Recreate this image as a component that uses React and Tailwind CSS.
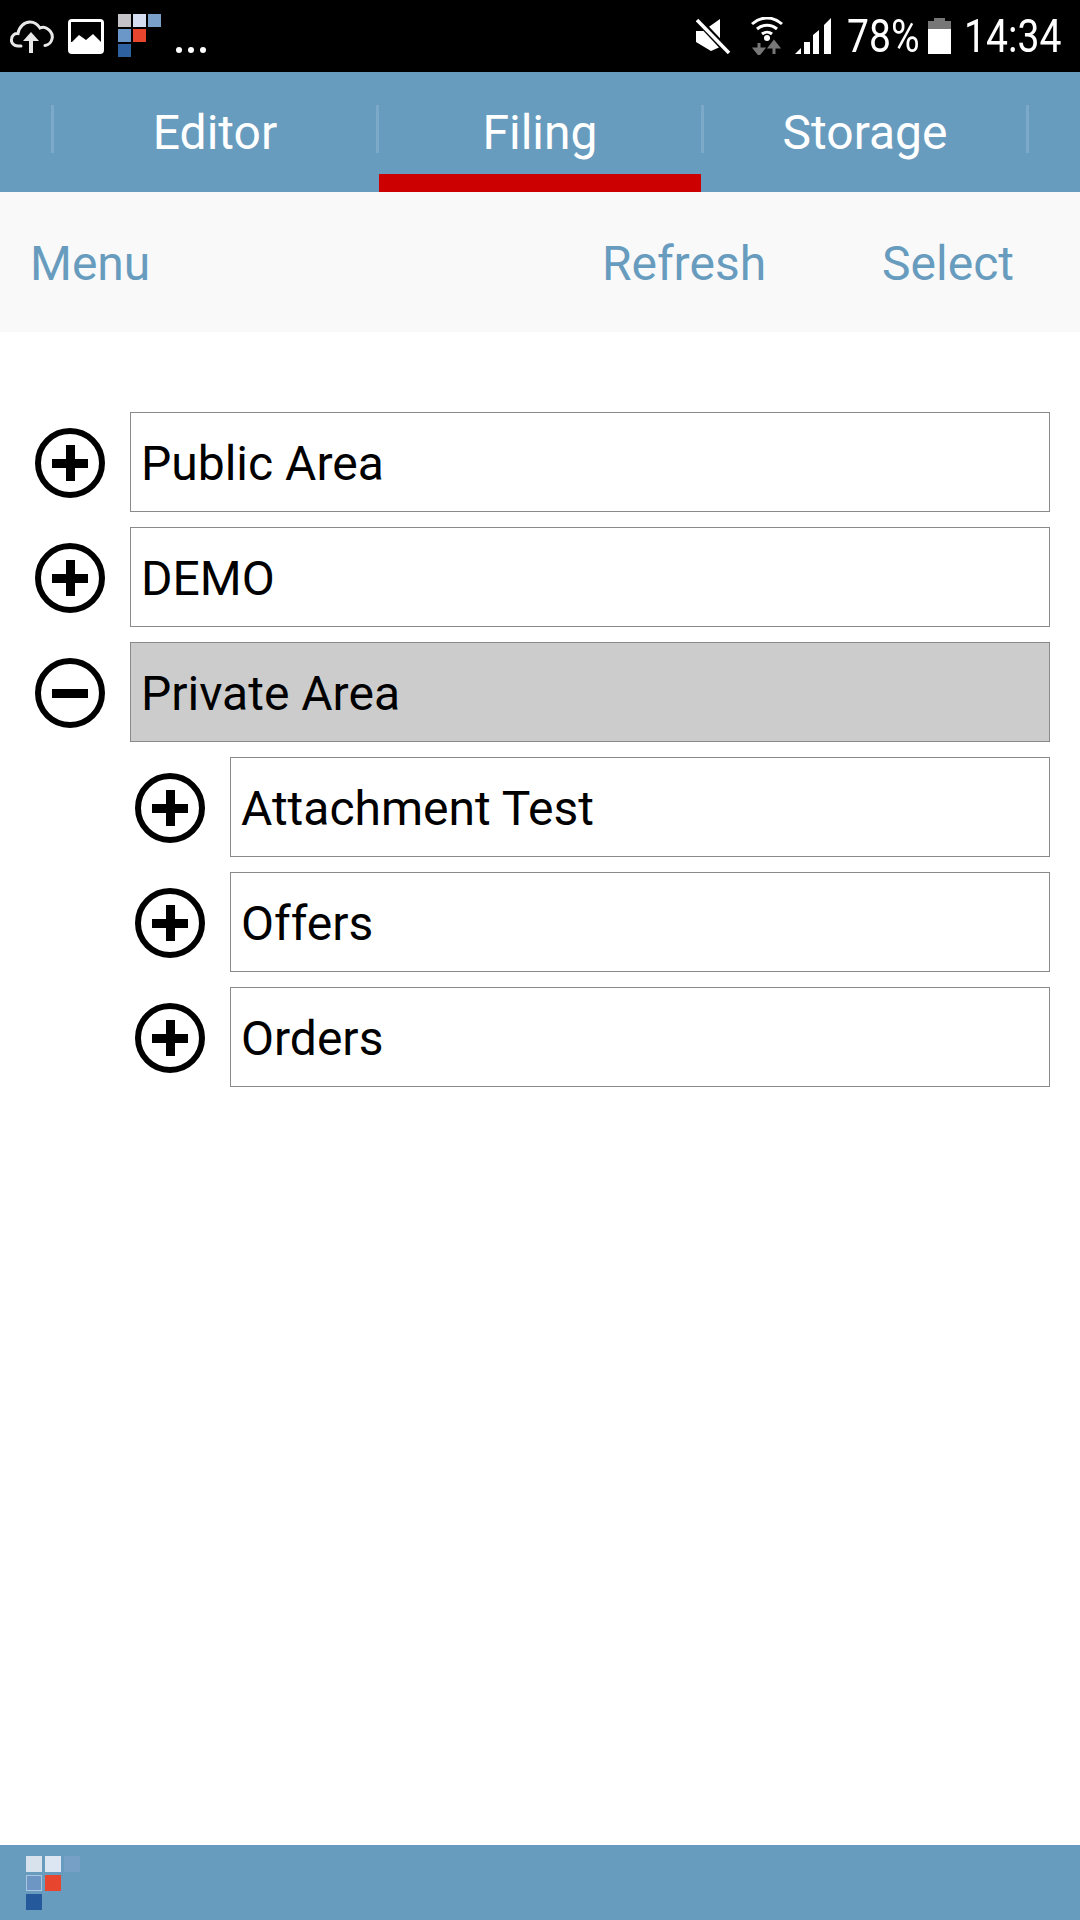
import React from 'react';

const StatusLogo = () => (
    <div className="grid grid-cols-[13px_13px_13px] grid-rows-[13px_13px_13px] gap-[2px] ml-[14px] -mt-[1px]">
        <div className="bg-[#c4c4c8]"></div>
        <div className="bg-[#d5def0]"></div>
        <div className="bg-[#7a9fc8]"></div>
        <div className="bg-[#6b97c8]"></div>
        <div className="bg-[#e8452f]"></div>
        <div></div>
        <div className="bg-[#2d619f]"></div>
    </div>
);

const FooterLogo = () => (
    <div className="grid grid-cols-[16px_16px_16px] grid-rows-[16px_16px_16px] gap-x-[3px] gap-y-[3px]">
        <div className="bg-[#d8e2ec]"></div>
        <div className="bg-[#dce6f2]"></div>
        <div className="bg-[#76a0c6]"></div>
        <div className="bg-[#6e96c4] border border-[#a9c6de]"></div>
        <div className="bg-[#e8452f]"></div>
        <div></div>
        <div className="bg-[#24599c]"></div>
    </div>
);

const CloudIcon = () => (
    <svg width="44" height="34" viewBox="0 0 44 34" fill="none" className="shrink-0">
        <path d="M11 27 H8 C3 27 1 23 1.500 20 C2 16 5 14 8 14.500 C9 8 14 3 20 3 C25 3 28 6 30 9 C32 8 35 8 37 9.500 C41 12 43 16 42 20 C41 24 38 26 35 26.500" stroke="#e8e8e8" strokeWidth="3" strokeLinecap="round" />
        <path d="M21 34 V18" stroke="#e8e8e8" strokeWidth="4" />
        <path d="M13 22 L21 13 L29 22 Z" fill="#e8e8e8" />
    </svg>
);

const ImageIcon = () => (
    <svg width="36" height="35" viewBox="0 0 36 35" className="shrink-0 ml-[14px]">
        <rect x="0" y="0" width="36" height="35" rx="4" fill="#fff" />
        <rect x="3" y="3" width="30" height="20" fill="#000" />
        <path d="M3 24 L11 16 L18 21 L25 15 L33 23 V24 Z" fill="#fff" />
    </svg>
);

const MuteIcon = () => (
    <svg width="35" height="36" viewBox="0 0 35 36" className="shrink-0">
        <path d="M0 13 H7 L24 1 V29 L15 33 L0 24 Z" fill="#fff" />
        <path d="M2 2 L32 34" stroke="#000" strokeWidth="7" />
        <path d="M1 2 L33 35" stroke="#fff" strokeWidth="3.500" />
    </svg>
);

const WifiIcon = () => (
    <svg width="32" height="38" viewBox="0 0 32 38" fill="none" className="shrink-0">
        <path d="M1 7 C10 -1 22 -1 31 7" stroke="#fff" strokeWidth="3" />
        <path d="M6 12 C12 7 20 7 26 12" stroke="#fff" strokeWidth="3" />
        <path d="M11 17 C14 14.500 18 14.500 21 17" stroke="#fff" strokeWidth="3" />
        <circle cx="16" cy="21" r="3" fill="#fff" />
        <path d="M8 26 V34 M4 32 L8 37 L12 32 Z" stroke="#777" strokeWidth="3" fill="#777" />
        <path d="M23 37 V28 M19 30 L23 25 L27 30 Z" stroke="#777" strokeWidth="3" fill="#777" />
    </svg>
);

const SignalIcon = () => (
    <svg width="37" height="36" viewBox="0 0 37 36" className="shrink-0">
        <path d="M0 36 L6 30 V36 Z" fill="#fff" />
        <rect x="9" y="24" width="6" height="12" fill="#fff" />
        <path d="M18 17 L24 12 V36 H18 Z" fill="#fff" />
        <path d="M29 7 L36 0 V36 H29 Z" fill="#fff" />
    </svg>
);

const BatteryIcon = () => (
    <svg width="23" height="36" viewBox="0 0 23 36" className="shrink-0">
        <rect x="6" y="0" width="11" height="4" fill="#777" />
        <rect x="0" y="3" width="23" height="8" fill="#777" />
        <rect x="0" y="11" width="23" height="25" fill="#fff" />
    </svg>
);

const ToggleIcon = ({ open }) => (
    <svg width="70" height="70" viewBox="0 0 70 70" fill="none" className="shrink-0 mt-[1px] blur-[0.6px]">
        <circle cx="35" cy="35" r="32" stroke="#000" strokeWidth="6" />
        <rect x="17" y="31" width="36" height="9" fill="#000" />
        {!open && <rect x="31" y="17" width="9" height="36" fill="#000" />}
    </svg>
);

const Tab = ({ label, active }) => (
    <div className="relative w-[322px] h-full flex items-center justify-center">
        <span className="text-white text-[48px] leading-none pt-[2px]">{label}</span>
        {active && <div className="absolute left-0 right-0 bottom-0 h-[18px] bg-[#cc0000]"></div>}
    </div>
);

const Row = ({ label, open, selected, child }) => (
    <div className={`flex items-center h-[100px] ${child ? 'pl-[135px]' : 'pl-[35px]'} pr-[30px]`}>
        <ToggleIcon open={open} />
        <div
            className={`flex-1 h-full ml-[25px] flex items-center pl-[10px] pt-[3px] border border-[#8a8a8a] text-black text-[48px] leading-none ${selected ? 'bg-[#cccccc]' : 'bg-white'}`}
        >
            {label}
        </div>
    </div>
);

const Separator = () => <div className="w-[3px] h-[48px] bg-[#7ca9c8] shrink-0 -mt-[6px]"></div>;

const App = () => {
    return (
        <div className="w-[1080px] h-[1920px] flex flex-col bg-white overflow-hidden font-['Roboto',sans-serif]">
            <div className="h-[72px] bg-black flex items-center shrink-0 pl-[10px] pr-[19px]">
                <CloudIcon />
                <ImageIcon />
                <StatusLogo />
                <svg width="32" height="8" viewBox="0 0 32 8" className="ml-[14px] mt-[27px]">
                    <circle cx="4" cy="4" r="3" fill="#fff" />
                    <circle cx="16" cy="4" r="3" fill="#fff" />
                    <circle cx="28" cy="4" r="3" fill="#fff" />
                </svg>
                <div className="flex-1"></div>
                <MuteIcon />
                <div className="ml-[20px]"><WifiIcon /></div>
                <div className="ml-[12px]"><SignalIcon /></div>
                <span className="ml-[15px] w-[71px] text-white text-[46px] leading-none whitespace-nowrap inline-block origin-left scale-x-[0.85]">78%</span>
                <div className="ml-[10px]"><BatteryIcon /></div>
                <span className="ml-[13px] w-[97px] text-white text-[46px] leading-none whitespace-nowrap inline-block origin-left scale-x-[0.85]">14:34</span>
            </div>

            <div className="h-[120px] bg-[#689cbe] flex items-center shrink-0 pl-[51px]">
                <Separator />
                <Tab label="Editor" />
                <Separator />
                <Tab label="Filing" active />
                <Separator />
                <Tab label="Storage" />
                <Separator />
            </div>

            <div className="h-[140px] bg-[#f9f9f9] flex items-center shrink-0 pl-[30px] pr-[66px] pt-[3px] text-[#689cbe] text-[48px] leading-none">
                <span>Menu</span>
                <div className="flex-1"></div>
                <span>Refresh</span>
                <span className="ml-[116px]">Select</span>
            </div>

            <div className="flex-1 pt-[80px] flex flex-col gap-[15px]">
                <Row label="Public Area" />
                <Row label="DEMO" />
                <Row label="Private Area" open selected />
                <Row label="Attachment Test" child />
                <Row label="Offers" child />
                <Row label="Orders" child />
            </div>

            <div className="h-[75px] bg-[#689cbe] shrink-0 flex items-center pl-[26px]">
                <FooterLogo />
            </div>
        </div>
    );
};

export default App;
